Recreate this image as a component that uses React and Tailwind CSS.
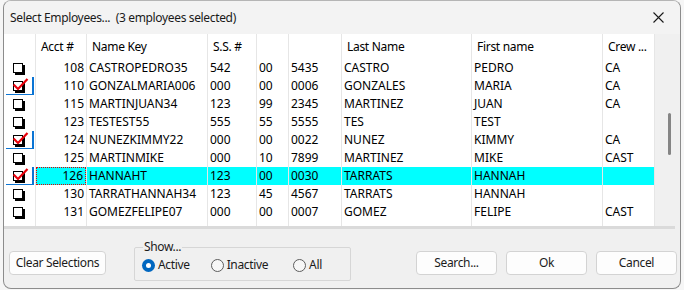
import React from 'react';

const rows = [
  { acct: 108, key: 'CASTROPEDRO35', ss: '542', a: '00', b: '5435', last: 'CASTRO', first: 'PEDRO', crew: 'CA', checked: false },
  { acct: 110, key: 'GONZALMARIA006', ss: '000', a: '00', b: '0006', last: 'GONZALES', first: 'MARIA', crew: 'CA', checked: true },
  { acct: 115, key: 'MARTINJUAN34', ss: '123', a: '99', b: '2345', last: 'MARTINEZ', first: 'JUAN', crew: 'CA', checked: false },
  { acct: 123, key: 'TESTEST55', ss: '555', a: '55', b: '5555', last: 'TES', first: 'TEST', crew: '', checked: false },
  { acct: 124, key: 'NUNEZKIMMY22', ss: '000', a: '00', b: '0022', last: 'NUNEZ', first: 'KIMMY', crew: 'CA', checked: true },
  { acct: 125, key: 'MARTINMIKE', ss: '000', a: '10', b: '7899', last: 'MARTINEZ', first: 'MIKE', crew: 'CAST', checked: false },
  { acct: 126, key: 'HANNAHT', ss: '123', a: '00', b: '0030', last: 'TARRATS', first: 'HANNAH', crew: '', checked: true, current: true },
  { acct: 130, key: 'TARRATHANNAH34', ss: '123', a: '45', b: '4567', last: 'TARRATS', first: 'HANNAH', crew: '', checked: false },
  { acct: 131, key: 'GOMEZFELIPE07', ss: '000', a: '00', b: '0007', last: 'GOMEZ', first: 'FELIPE', crew: 'CAST', checked: false },
];

const cols = 'grid grid-cols-[31px_51px_121px_49px_32px_53px_130px_131px_52px]';

function CheckBox({ checked }) {
  return (
    <svg width="16" height="16" viewBox="0 0 16 16" className="ml-[9px]">
      <rect x="2" y="5" width="10" height="10" fill="#000" />
      <rect x="0.5" y="3.5" width="9" height="9" fill="#fff" stroke="#000" />
      {checked && (
        <polyline points="0.5,6.5 5,11 14.5,1" fill="none" stroke="#e8000b" strokeWidth="2.2" strokeLinejoin="miter" />
      )}
    </svg>
  );
}

function Radio({ on, label }) {
  return (
    <div className="flex items-center gap-[3px]">
      {on ? (
        <span className="w-[13px] h-[13px] rounded-full bg-[#0067c0] flex items-center justify-center">
          <span className="w-[5px] h-[5px] rounded-full bg-white" />
        </span>
      ) : (
        <span className="w-[13px] h-[13px] rounded-full border border-[#5d5d5d] bg-[#f7f7f7]" />
      )}
      <span className="text-[#1b1b1b] tracking-[-0.35px]">{label}</span>
    </div>
  );
}

function Button({ children, className }) {
  return (
    <button className={'h-[24px] rounded-[4px] border border-[#d3d3d3] bg-[#fdfdfd] text-[#1b1b1b] tracking-[-0.35px] flex items-center justify-center ' + className}>
      {children}
    </button>
  );
}

export default function App() {
  const cell = 'border-l border-[#e6e6e6] pl-[2px] leading-[18px] truncate';
  return (
    <div className="w-[684px] h-[290px] bg-[#f6f6f6] font-['Noto_Sans',sans-serif] text-[12px] leading-[16px] overflow-hidden">
      <div className="ml-[3px] w-[678px] h-[289px] border border-[#8c8c8c] border-t-[#b5b5b5] rounded-[8px] bg-[#f0f0f0] flex flex-col overflow-hidden">
        {/* Title bar */}
        <div className="h-[33px] shrink-0 bg-[#f3f3f3] flex items-center justify-between pl-[6px] pr-[16px]">
          <span className="text-[#1a1a1a] tracking-[-0.35px]">Select Employees...&nbsp;&nbsp;(3 employees selected)</span>
          <svg width="11" height="11" viewBox="0 0 11 11">
            <path d="M0.5 0.5 L10.5 10.5 M10.5 0.5 L0.5 10.5" stroke="#1a1a1a" strokeWidth="1.1" />
          </svg>
        </div>

        {/* Grid */}
        <div className="flex h-[192px] w-[671px] bg-white border-b-[3px] border-[#dadada] box-content">
          <div className="w-[650px] flex flex-col">
            <div className={cols + ' h-[25px] items-stretch text-black'}>
              <div />
              {['Acct #', 'Name Key', 'S.S. #', '', '', 'Last Name', 'First name', 'Crew ...'].map((h, i) => (
                <div key={i} className="border-l border-[#e6e6e6] pl-[5px] pt-[1px] flex items-center truncate tracking-[-0.3px]">{h}</div>
              ))}
            </div>
            {rows.map((r) => {
              const hl = r.current ? 'bg-[#00ffff]' : '';
              return (
                <div key={r.acct} className={cols + ' h-[18px] items-stretch text-black'}>
                  <div className="flex items-stretch">
                    {r.checked ? (
                      <div className="ml-[2px] w-[28px] border-r-2 border-b border-[#0a74d4] flex items-center">
                        <span className="-ml-[2px] flex"><CheckBox checked /></span>
                      </div>
                    ) : (
                      <div className="flex items-center"><CheckBox /></div>
                    )}
                  </div>
                  <div className={'border-l border-[#e6e6e6] ' + hl}>
                    <div className={'h-full flex items-center justify-end pr-[2px] ' + (r.current ? 'border border-dotted border-[#e00000]' : '')}>{r.acct}</div>
                  </div>
                  <div className={cell + ' ' + hl}>{r.key}</div>
                  <div className={cell + ' ' + hl}>{r.ss}</div>
                  <div className={cell + ' ' + hl}>{r.a}</div>
                  <div className={cell + ' ' + hl}>{r.b}</div>
                  <div className={cell + ' ' + hl}>{r.last}</div>
                  <div className={cell + ' ' + hl}>{r.first}</div>
                  <div className={cell + ' ' + hl}>{r.crew}</div>
                </div>
              );
            })}
            <div className={cols + ' flex-1'}>
              <div />
              {[0, 1, 2, 3, 4, 5, 6, 7].map((i) => (
                <div key={i} className="border-l border-[#e6e6e6]" />
              ))}
            </div>
          </div>
          {/* Scrollbar */}
          <div className="w-[21px] bg-[#f0f0f0] border-l border-[#e6e6e6] flex flex-col pt-[79px] pl-[13px]">
            <div className="w-[3px] h-[42px] rounded-full bg-[#858585]" />
          </div>
        </div>

        {/* Bottom panel */}
        <div className="flex items-start pl-[5px] pr-[3px]">
          <Button className="mt-[22px] w-[97px]">Clear Selections</Button>
          <div className="relative mt-[18px] ml-[28px] w-[217px] h-[34px] border border-[#d6d6d6] rounded-[2px] flex items-center pl-[7px] pt-[2px]">
            <span className="absolute -top-[9px] left-[8px] bg-[#f0f0f0] px-[1px] text-[#1b1b1b] tracking-[-0.35px]">Show...</span>
            <Radio on label="Active" />
            <div className="ml-[21px]"><Radio label="Inactive" /></div>
            <div className="ml-[25px]"><Radio label="All" /></div>
          </div>
          <div className="ml-auto mt-[22px] flex gap-[9px]">
            <Button className="w-[81px]">Search...</Button>
            <Button className="w-[81px]">Ok</Button>
            <Button className="w-[81px]">Cancel</Button>
          </div>
        </div>
      </div>
    </div>
  );
}
